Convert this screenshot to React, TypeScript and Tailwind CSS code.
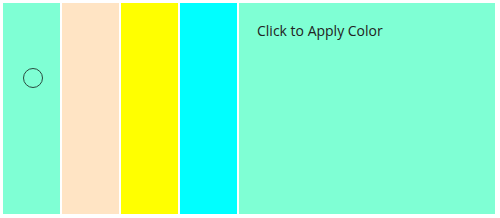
import React, { useState } from "react";

const swatches = [
  { color: "#7fffd4", cls: "bg-[#7fffd4]" },
  { color: "#ffe4c4", cls: "bg-[#ffe4c4]" },
  { color: "#ffff00", cls: "bg-[#ffff00]" },
  { color: "#00ffff", cls: "bg-[#00ffff]" },
];

export default function App() {
  const [selected, setSelected] = useState(0);
  const [applied, setApplied] = useState("#7fffd4");

  return (
    <div className="flex h-[218px] w-[500px] gap-[2px] bg-white pt-[3px] pr-[5px] pb-[4px] pl-[3px] font-['Open_Sans','Noto_Sans',sans-serif]">
      {swatches.map((s, i) => (
        <button
          key={s.color}
          onClick={() => setSelected(i)}
          className={`relative h-full w-[57px] shrink-0 ${s.cls}`}
        >
          {selected === i && (
            <span className="absolute left-[20px] top-[65px] h-[20px] w-[20px] rounded-full border-[1.5px] border-[#2a4a3f]" />
          )}
        </button>
      ))}
      <div
        className="flex-1 cursor-pointer pl-[18px] pt-[18px]"
        style={{ backgroundColor: applied }}
        onClick={() => setApplied(swatches[selected].color)}
      >
        <p className="text-[14px] leading-[20px] text-[#222]">Click to Apply Color</p>
      </div>
    </div>
  );
}
